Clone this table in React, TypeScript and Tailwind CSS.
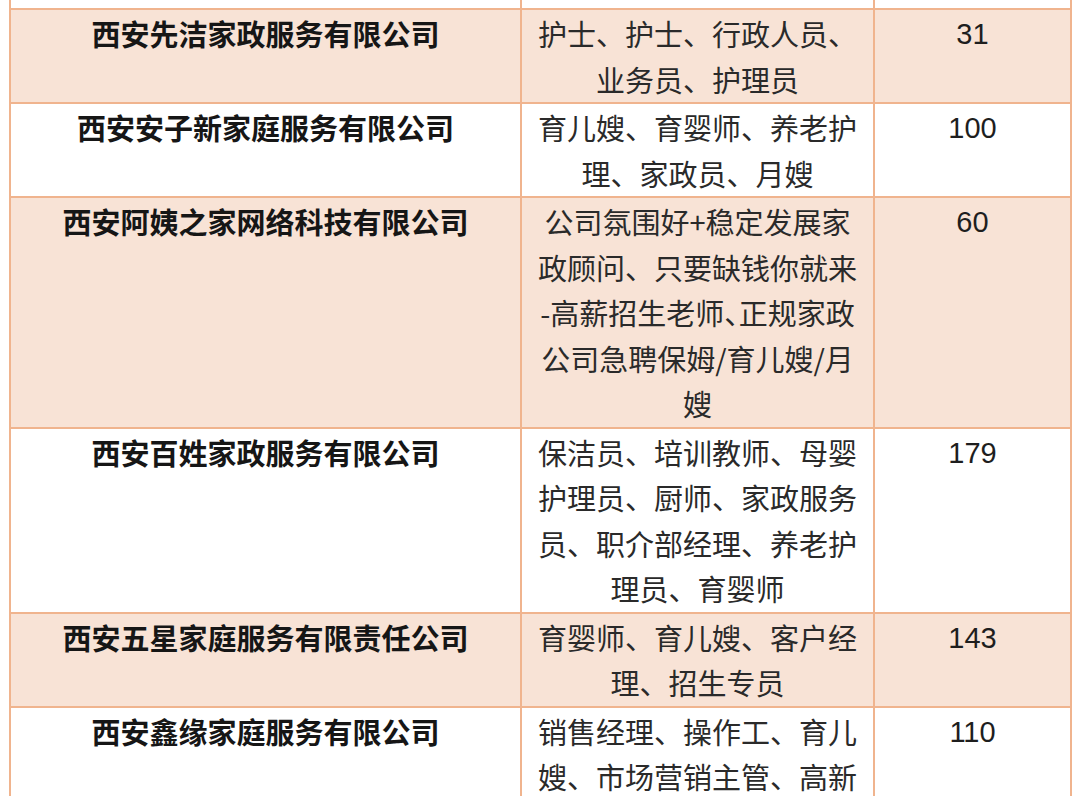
const rows = [
  {
    name: "西安先洁家政服务有限公司",
    jobs: ["护士、护士、行政人员、", "业务员、护理员"],
    count: "31",
    shaded: true,
  },
  {
    name: "西安安子新家庭服务有限公司",
    jobs: ["育儿嫂、育婴师、养老护", "理、家政员、月嫂"],
    count: "100",
    shaded: false,
  },
  {
    name: "西安阿姨之家网络科技有限公司",
    jobs: [
      "公司氛围好+稳定发展家",
      "政顾问、只要缺钱你就来",
      "-高薪招生老师、正规家政",
      "公司急聘保姆/育儿嫂/月",
      "嫂",
    ],
    count: "60",
    shaded: true,
  },
  {
    name: "西安百姓家政服务有限公司",
    jobs: ["保洁员、培训教师、母婴", "护理员、厨师、家政服务", "员、职介部经理、养老护", "理员、育婴师"],
    count: "179",
    shaded: false,
  },
  {
    name: "西安五星家庭服务有限责任公司",
    jobs: ["育婴师、育儿嫂、客户经", "理、招生专员"],
    count: "143",
    shaded: true,
  },
  {
    name: "西安鑫缘家庭服务有限公司",
    jobs: ["销售经理、操作工、育儿", "嫂、市场营销主管、高新"],
    count: "110",
    shaded: false,
  },
];

const cell = "border-2 border-[#f0b48e] align-top text-center p-0";

const App = () => {
  return (
    <div className="w-[1080px] h-[796px] overflow-hidden bg-white">
      <table className="ml-[9px] w-[1061px] border-collapse table-fixed text-[29px] leading-[45.5px]">
        <colgroup>
          <col className="w-[511px]" />
          <col className="w-[353px]" />
          <col className="w-[197px]" />
        </colgroup>
        <tbody>
          {/* tail of the row above, cut off by the screenshot */}
          <tr className="h-[9px] bg-white">
            <td className={`${cell} border-t-0`}></td>
            <td className={`${cell} border-t-0`}></td>
            <td className={`${cell} border-t-0`}></td>
          </tr>
          {rows.map((row) => (
            <tr key={row.name} className={row.shaded ? "bg-[#f8e3d6]" : "bg-white"}>
              <td className={`${cell} pt-[1px] font-bold text-[#161616] font-['Noto_Sans_CJK_SC',sans-serif]`}>
                {row.name}
              </td>
              <td className={`${cell} pt-[1px] text-[#2a2a2a] font-['Noto_Sans_CJK_SC',sans-serif]`}>
                {row.jobs.map((line, i) => (
                  <div
                    key={i}
                    className={
                      line.startsWith("-")
                        ? "whitespace-nowrap [font-feature-settings:'halt']"
                        : "whitespace-nowrap"
                    }
                  >
                    {line}
                  </div>
                ))}
              </td>
              <td className={`${cell} pt-[2px] text-[#1e1e1e] font-['Liberation_Sans',Arial,sans-serif]`}>
                {row.count}
              </td>
            </tr>
          ))}
        </tbody>
      </table>
    </div>
  );
};

export default App;
